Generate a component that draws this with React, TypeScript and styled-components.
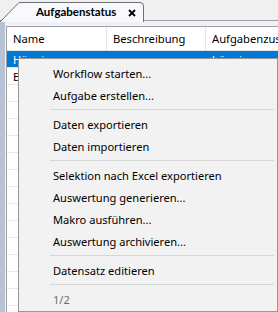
import React from 'react'
import styled, { createGlobalStyle } from 'styled-components'

const GlobalStyle = createGlobalStyle`
  html, body {
    margin: 0;
    padding: 0;
  }
  body {
    width: 278px;
    height: 312px;
    overflow: hidden;
    background: #f0f0f0;
    font-family: 'Noto Sans', 'Open Sans', sans-serif;
  }
`

const Window = styled.div`
  position: relative;
  width: 278px;
  height: 312px;
  overflow: hidden;
  display: flex;
  flex-direction: column;
`

const TabStrip = styled.div`
  display: flex;
  align-items: flex-end;
  height: 21px;
  flex: none;
  border-bottom: 1px solid #a0a0a0;
  box-sizing: border-box;
`

const Tab = styled.div`
  position: relative;
  display: flex;
  align-items: center;
  gap: 12px;
  width: 144px;
  height: 20px;
  box-sizing: border-box;
  padding: 1px 0 0 36px;
  margin-bottom: -1px;
`

const TabShape = styled.svg`
  position: absolute;
  left: 0;
  top: 0;
  width: 144px;
  height: 21px;
`

const TabLabel = styled.span`
  position: relative;
  font-family: Lato, 'Noto Sans', sans-serif;
  font-size: 11.5px;
  font-weight: 700;
  color: #000;
`

const CloseIcon = styled.svg`
  position: relative;
  width: 8px;
  height: 8px;
  margin-top: 2px;
`

const Panel = styled.div`
  flex: 1;
  display: flex;
  padding: 5px 0 0 6px;
  background: linear-gradient(to right, #b7c2d6 0, #b7c2d6 5px, #eef2f8 5px);
  min-height: 0;
`

const Grid = styled.div`
  flex: 1;
  background: #fff;
  border-top: 1px solid #a0a0a0;
  border-left: 1px solid #a0a0a0;
  overflow: hidden;
`

const columns = '100px 99px 120px'

const HeaderRow = styled.div`
  display: grid;
  grid-template-columns: ${columns};
  height: 23px;
  border-bottom: 1px solid #e5e5e5;
`

const HeaderCell = styled.div`
  display: flex;
  align-items: center;
  padding-left: 6px;
  font-size: 11.2px;
  color: #000;
  border-right: 1px solid #e5e5e5;
  white-space: nowrap;
  overflow: hidden;
`

const Row = styled.div<{ $selected?: boolean }>`
  display: grid;
  grid-template-columns: ${columns};
  height: 17px;
  box-sizing: border-box;
  border-bottom: 1px solid #e8e8e8;
  background: ${({ $selected }) => ($selected ? '#0078d7' : '#fff')};
  color: ${({ $selected }) => ($selected ? '#fff' : '#000')};
`

const Cell = styled.div`
  display: flex;
  align-items: center;
  padding-left: 6px;
  font-size: 11.2px;
  white-space: nowrap;
  overflow: hidden;
`

const Menu = styled.div`
  position: absolute;
  left: 18px;
  top: 58px;
  width: 260px;
  height: 254px;
  box-sizing: border-box;
  padding: 3px 2px 2px 2px;
  background: #f2f2f2;
  border: 1px solid #979797;
  display: flex;
  flex-direction: column;
`

const MenuItem = styled.div<{ $disabled?: boolean }>`
  display: flex;
  align-items: center;
  height: 22px;
  flex: none;
  padding-left: 32px;
  font-size: 11.1px;
  color: ${({ $disabled }) => ($disabled ? '#6d6d6d' : '#000')};
  white-space: nowrap;
`

const Separator = styled.div`
  height: 1px;
  flex: none;
  margin: 3px 1px 3px 29px;
  background: #d7d7d7;
`

type Entry = { label: string; disabled?: boolean } | 'sep'

const entries: Entry[] = [
  { label: 'Workflow starten...' },
  { label: 'Aufgabe erstellen...' },
  'sep',
  { label: 'Daten exportieren' },
  { label: 'Daten importieren' },
  'sep',
  { label: 'Selektion nach Excel exportieren' },
  { label: 'Auswertung generieren...' },
  { label: 'Makro ausführen...' },
  { label: 'Auswertung archivieren...' },
  'sep',
  { label: 'Datensatz editieren' },
  'sep',
  { label: '1/2', disabled: true },
]

const rows = [
  ['Hängig', '', 'hängig'],
  ['Erledigt', '', 'erledigt'],
  ...Array.from({ length: 14 }, () => ['', '', '']),
]

export default function App() {
  return (
    <>
      <GlobalStyle />
      <Window>
        <TabStrip>
          <Tab>
            <TabShape viewBox="0 0 144 21">
              <path
                d="M0 21 L19 1.5 H140 Q143.5 1.5 143.5 5 V21"
                fill="#f7f9fc"
                stroke="#6f6f6f"
                strokeWidth="1"
              />
            </TabShape>
            <TabLabel>Aufgabenstatus</TabLabel>
            <CloseIcon viewBox="0 0 8 8">
              <path d="M1 1 L7 7 M7 1 L1 7" stroke="#000" strokeWidth="1.8" />
            </CloseIcon>
          </Tab>
        </TabStrip>
        <Panel>
          <Grid>
            <HeaderRow>
              <HeaderCell>Name</HeaderCell>
              <HeaderCell>Beschreibung</HeaderCell>
              <HeaderCell>Aufgabenzus</HeaderCell>
            </HeaderRow>
            {rows.map((r, i) => (
              <Row key={i} $selected={i === 0}>
                <Cell>{r[0]}</Cell>
                <Cell>{r[1]}</Cell>
                <Cell>{r[2]}</Cell>
              </Row>
            ))}
          </Grid>
        </Panel>
        <Menu>
          {entries.map((e, i) =>
            e === 'sep' ? (
              <Separator key={i} />
            ) : (
              <MenuItem key={i} $disabled={e.disabled}>
                {e.label}
              </MenuItem>
            )
          )}
        </Menu>
      </Window>
    </>
  )
}
